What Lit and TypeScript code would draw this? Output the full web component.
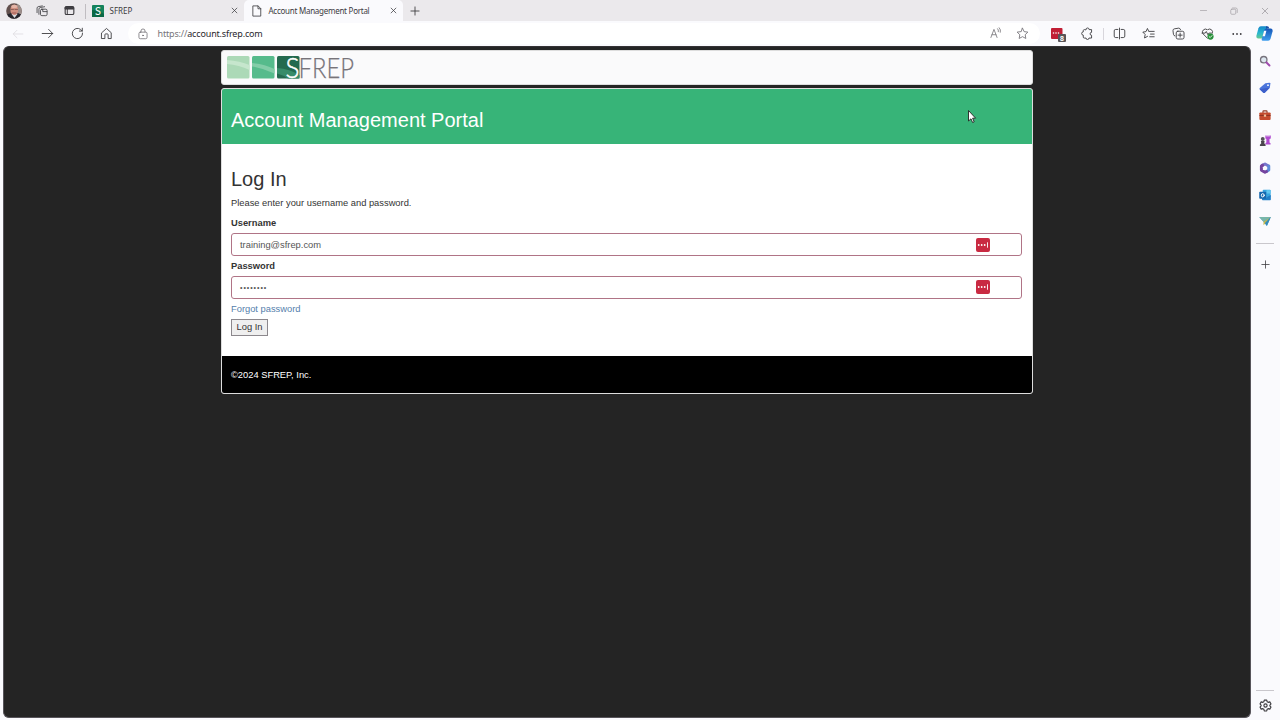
import { LitElement, html, css, svg } from "lit";
import { customElement } from "lit/decorators.js";

const icon = (size: number, body: unknown, box = 16) =>
  html`<svg width=${size} height=${size} viewBox="0 0 ${box} ${box}" fill="none" stroke="currentColor" stroke-width="1.1" stroke-linecap="round" stroke-linejoin="round">${body}</svg>`;

const I = {
  avatar: svg`<defs><clipPath id="face"><circle cx="8" cy="8" r="7.8"/></clipPath></defs>
    <g clip-path="url(#face)" stroke="none"><rect width="16" height="16" fill="#62504d"/><rect x="11" width="5" height="11" fill="#9c8e8a"/>
    <path d="M0 16V12l5-2 3 3 4-3 4 2v4z" fill="#26262d"/><path d="M5.5 11l3 4 3-4z" fill="#d9dbe0"/>
    <ellipse cx="8.3" cy="6.8" rx="3.9" ry="5.3" fill="#cf8f80"/><ellipse cx="8.3" cy="3.4" rx="3" ry="1.7" fill="#e4b5a7"/>
    <path d="M5 6.5h2.5M9 6.5h2.500" stroke="#7d5650" stroke-width=".8"/><path d="M6.5 10h3.5" stroke="#9c5550" stroke-width=".9"/></g>`,
  spaces: svg`<rect x="6" y="5.6" width="8.800" height="8.600" rx="1.8"/><path d="M3.900 12.400V5.500q0-1.700 1.700-2.100L11.500 2.300M1.400 10.200V4.200Q1.400 2.600 2.900 2.200L8.500 1.200M9 5.800v3h5.500" />`,
  tabs: svg`<rect x="1.7" y="2.3" width="12.6" height="11.6" rx="2" stroke-width="1.6"/><path d="M2 3h12v3H2z" fill="currentColor"/><path d="M4.800 6v8" stroke-width="1.4"/>`,
  close: svg`<path d="M2.5 2.5l11 11M13.5 2.5l-11 11" stroke-width="1.7"/>`,
  plus: svg`<path d="M8 1.5v13M1.5 8h13" stroke-width="1.400"/>`,
  page: svg`<path d="M3 1.2h6.5L13 4.8v10H3zM9.3 1.4V5H13"/>`,
  back: svg`<path d="M14.5 8H1.7M6.6 3L1.6 8l5 5"/>`,
  forward: svg`<path d="M1.5 8h12.8M9.4 3l5 5-5 5"/>`,
  reload: svg`<path d="M14.200 7.500a6.300 6.300 0 1 1-2.600-4.600L13.800 5M13.900 1.500V5h-3.600"/>`,
  home: svg`<path d="M2.2 7L8 1.8 13.8 7v7.2H10V9.5q0-1-1-1H7q-1 0-1 1v4.7H2.2z"/>`,
  lock: svg`<rect x="2.6" y="5.5" width="10.8" height="8.8" rx="1.8"/><path d="M5.3 5.3V4a2.7 2.7 0 0 1 5.4 0v1.3"/><circle cx="8" cy="9.9" r=".6" fill="currentColor"/>`,
  read: svg`<path d="M1.2 14L5.3 3.2 9.4 14M2.7 10.3h5.2M10.2 2.3q1.5 1.5 1 4M12.3 1q2.5 2.6 1.5 6"/>`,
  star: svg`<path d="M8 1.5l2 4.2 4.6.6-3.3 3.2.8 4.6L8 11.9l-4.1 2.2.8-4.6L1.4 6.3 6 5.7z"/>`,
  puzzle: svg`<path d="M6 3.2a2 2 0 0 1 4 0h3v3.4a1.8 1.8 0 0 0 0 3.6v3.4H9.8a1.8 1.8 0 0 1-3.6 0H4q-1.2 0-1.2-1.2V10a2 2 0 0 1 0-4V4.4q0-1.2 1.2-1.2z"/>`,
  split: svg`<path d="M6 3H3.3Q1.5 3 1.5 4.8v6.4Q1.5 13 3.3 13H6M10 3h2.7q1.8 0 1.8 1.8v6.4q0 1.8-1.8 1.8H10M8 1.3v13.4"/>`,
  favs: svg`<path d="M8.8 5.4H15M10.5 8.7H15M9.5 12H15M8.2 5.2L6.7 1.8 4.9 5.7l-3.9.6 2.9 2.9-.8 4.3 3.7-2"/>`,
  collections: svg`<rect x="5.2" y="5.2" width="9.6" height="9.6" rx="2"/><path d="M10 7.5v5M7.5 10h5M3.5 11Q2 10.6 1.8 9L1.2 4.5Q1.1 2.7 2.8 2.3l5.4-.9q1.7-.1 2.3 1.8"/>`,
  health: svg`<path d="M8 14L2.4 8.3a3.7 3.7 0 0 1 5.3-5L8 3.6l.3-.3a3.7 3.7 0 0 1 5.6 4.5M1.2 7.5h4l1.3-2 2 4 1.2-2h3"/><circle cx="11.7" cy="11.8" r="3.8" fill="#27903a" stroke="none"/><path d="M10 11.8l1.3 1.2 2.2-2.4" stroke="#fff"/>`,
  more: svg`<g fill="currentColor" stroke="none"><circle cx="3" cy="8" r="1.2"/><circle cx="8" cy="8" r="1.2"/><circle cx="13" cy="8" r="1.2"/></g>`,
  copilot: svg`<defs><linearGradient id="cpa" x1="0" y1="0" x2="0" y2="1"><stop stop-color="#1687c9"/><stop offset=".55" stop-color="#27b7cf"/><stop offset="1" stop-color="#68c990"/></linearGradient><linearGradient id="cpb" x1="0" y1="0" x2="0" y2="1"><stop stop-color="#1556b8"/><stop offset="1" stop-color="#3f9eed"/></linearGradient></defs>
    <g stroke="none"><path d="M4.5 1.2h5q1.6 0 1.2 1.6L8.3 11q-.5 1.7-2.2 1.7H2.2Q0 12.700.4 10.2L2.300 3Q2.900 1.200 4.500 1.200z" fill="url(#cpa)"/><path d="M11.600 3.300h2.200q2.200 0 1.800 2.500L13.700 13q-.6 1.900-2.200 1.900h-5q-1.500 0-1.100-1.600L7.700 5q.5-1.700 2.200-1.700z" fill="url(#cpb)"/><path d="M7.600 5.500h2.200l-1.400 5H6.200z" fill="#fafafd"/><path d="M9.400 1.200h1.200q1.500 0 1.900 2.100h-3z" fill="#174ea6"/></g>`,
  search: svg`<circle cx="6.3" cy="6.300" r="4.300" fill="#dce6ef" stroke="#77737d" stroke-width="1.700"/><path d="M10 10l4 4" stroke="#a04aae" stroke-width="2.600"/>`,
  tag: svg`<path d="M8.500 1.700l5.500-.8q1.200 0 1.200 1l-.8 5.700-6.700 6.700q-1 .8-2 0L1 9.900q-.8-1 0-2z" fill="#4b75dc" stroke="none"/><path d="M1 9.500l4.800 4.900q1 .8 2 0l6.500-6.700L9.500 8z" fill="#3d5fca" stroke="none"/><circle cx="12" cy="4.200" r="1.200" fill="#fff" stroke="none"/>`,
  toolbox: svg`<path d="M5.300 5V3.400q0-.9.900-.9h3.600q.9 0 .9.900V5" stroke="#923b25" stroke-width="1.500"/><rect x=".5" y="4.500" width="15" height="10" rx="1.300" fill="#c44a2c" stroke="none"/><path d="M1 8.600h14" stroke="#7f2d20"/><rect x="6.500" y="7.300" width="3" height="3" fill="#f0c09a" stroke="none"/>`,
  games: svg`<g stroke="none"><path d="M8.500.8h1.700v1.400h1V.8h1.600v1.400h1V.8h1.900v3.800l-1.700.8V10l1.400 1v1.500H8.500V11l1.300-1V5.400l-1.300-.8z" fill="#b04bd0"/><circle cx="5" cy="5.300" r="2.600" fill="#555159"/><path d="M2.500 8h5L7 11l1.800 2v1.800H1.200V13L3 11z" fill="#4a464d"/></g>`,
  office: svg`<g stroke-width="4"><path d="M4.600 4.300L8 2.700l4.800 2.600" stroke="#7774cb"/><path d="M13 5.300v5.400L10 12.600" stroke="#5d8bd8"/><path d="M10 12.700l-2 1L3.200 10.800V5.500L4.800 4.500" stroke="#74449f"/></g>`,
  outlook: svg`<g stroke="none"><rect x="5" y="1" width="10.500" height="9.500" rx="1" fill="#37a5df"/><path d="M10 1.500h5.500v4.500H10z" fill="#62c7ef"/><path d="M4 8l6 3 5.800-3v6q0 1-1 1H5q-1 0-1-1z" fill="#227fc7"/><rect x=".3" y="3.700" width="9.300" height="9.300" rx="1" fill="#1668ae"/></g><ellipse cx="5" cy="8.400" rx="1.900" ry="2.200" stroke="#fff" stroke-width="1.300"/>`,
  drop: svg`<g stroke="none"><path d="M.3 2.700h15.500L10.500 14.500 6.500 9.700z" fill="#4fa3cf"/><path d="M.3 2.700h15.500L6 9z" fill="#78b6aa"/><path d="M15.800 2.700L6 9v4.700l2.200-2.400z" fill="#c3b84d"/><path d="M15.800 2.700L10.500 14.500 8 10.700z" fill="#348abb"/></g>`,
  gear: svg`<path d="M6.500 1.300h3l.5 2 1.300.8 2-.6 1.500 2.600L13.400 7.500v1l1.400 1.400-1.500 2.600-2-.6-1.300.8-.5 2h-3l-.5-2-1.300-.8-2 .6-1.500-2.600 1.400-1.400v-1L1.200 6.100l1.500-2.600 2 .6L6 3.300z" stroke-width="1.400"/><circle cx="8" cy="8" r="2" stroke-width="1.400"/>`,
  min: svg`<path d="M1 8h14" stroke-width="1.600"/>`,
  restore: svg`<rect x="1.500" y="4.500" width="10" height="10" rx="2" stroke-width="1.500"/><path d="M5 2h6.500q3 0 3 3v6" stroke-width="1.500"/>`,
};

const passBadge = html`<svg width="14" height="14" viewBox="0 0 14 14"><rect width="14" height="14" rx="2" fill="#c92a42"/><g fill="#fff"><circle cx="2.700" cy="7" r=".9"/><circle cx="5.700" cy="7" r=".9"/><circle cx="8.700" cy="7" r=".9"/><rect x="11" y="4.300" width=".9" height="5.400"/></g></svg>`;

@customElement("app-root")
export class AppRoot extends LitElement {
  static styles = css`
    :host { display: flex; flex-direction: column; width: 1280px; height: 720px; overflow: hidden; background: #fafafd; color: #3c3b3f; font-family: "Noto Sans", sans-serif; }
    * { box-sizing: border-box; }
    svg { display: block; flex: none; overflow: visible; }
    .strip { display: flex; height: 21px; background: #ebe9ec; align-items: stretch; font-size: 8px; }
    .strip .tab span { padding-bottom: 1px; }
    .cell { display: flex; align-items: center; justify-content: center; flex: none; }
    .w25 { width: 25px; }
    .w27 { width: 27.500px; }
    .w28 { width: 28px; }
    .first { padding-left: 1px; }
    .rule { width: 1px; height: 15px; margin: 2px 0 0 1px; background: #c0bdc1; }
    .tab { display: flex; align-items: center; padding-right: 6px; }
    .tab1 { width: 158px; padding-left: 6px; gap: 6px; }
    .tab2 { width: 159px; padding-left: 7px; gap: 6px; background: #fafafd; border-radius: 5px 5px 0 0; }
    .tab span { flex: 1; white-space: nowrap; }
    .tab2 span { letter-spacing: -.26px; }
    .winctl { display: flex; margin-left: auto; color: #a5a2a6; }
    .winctl .cell { width: 30.500px; }
    .bar { display: flex; height: 25px; align-items: center; padding-left: 3.500px; }
    .nav { display: flex; }
    .nav .cell, .tools .cell { width: 29.500px; }
    .faint { color: #dedce1; }
    .pill { display: flex; align-items: center; width: 912px; height: 21px; margin-left: 6px; background: #fff; border-radius: 11px; padding: 0 11px 0 9px; font-size: 9px; color: #77757a; }
    .pill b { font-weight: 400; color: #29272c; }
    .url { flex: 1; margin-left: 9px; letter-spacing: -.16px; }
    .ends { display: flex; gap: 14px; }
    .tools { display: flex; align-items: center; margin-left: 4px; }
    .tools .line { width: 1px; height: 12px; background: #d8d6dc; margin: 0 1px 0 0; }
    .tools .last { width: 25px; }
    .main { display: flex; flex: 1; min-height: 0; }
    .view { width: 1248px; height: 672px; margin-left: 3px; border: 1px solid #57545a; border-top-color: #343235; background: #242424; border-radius: 6px; padding: 3px 217px 0 216.500px; font-family: "Liberation Sans", Arial, sans-serif; font-size: 9.333px; color: #333; }
    .logo { height: 35px; border: 1px solid #ddd; border-radius: 3px; background: #fafafb; padding: 0 5px; }
    .card { margin-top: 3px; border: 1px solid #ddd; border-radius: 3px; background: #fff; overflow: hidden; height: 306px; display: flex; flex-direction: column; }
    .head { height: 55px; background: #37b478; color: #fff; padding: 19px 9.500px 0; font-size: 20px; line-height: 24px; }
    .body { height: 212px; padding: 23px 10px 0 9.500px; }
    h1 { font-size: 20px; line-height: 24px; font-weight: 400; margin: 0; }
    .intro { margin: 6px 0 7px; line-height: 13px; }
    label { display: block; font-weight: 700; line-height: 13px; }
    .field { display: flex; align-items: center; height: 23px; margin: 3px 0 3.500px; border: 1px solid #b07486; border-radius: 3px; padding: 0 31px 0 8px; color: #555; }
    .field span { flex: 1; }
    .pw { margin: 3.400px 0 4px; }
    .dots { font-size: 7px; letter-spacing: .95px; }
    .link { line-height: 13px; color: #5580ac; }
    .btn { display: flex; align-items: center; justify-content: center; width: 37px; height: 17px; margin-top: 3px; border: 1px solid #8c888d; background: #efefef; }
    .foot { flex: 1; background: #000; color: #fff; padding: 13px 9.500px 0; line-height: 13px; }
    .side { width: 28px; display: flex; flex-direction: column; align-items: center; padding-top: 2px; }
    .side .cell { height: 26.670px; }
    .side .cut { width: 18px; height: 1px; background: #c9c7cc; }
    .side .cut1 { margin-top: 8px; }
    .side .add { height: 41px; }
    .side .push { margin-top: auto; }
    .side .set { height: 29px; }
    .cursor { position: absolute; left: 967px; top: 109px; }
  `;

  render() {
    return html`
      <div class="strip">
        <div class="cell w27 first">${icon(16, I.avatar)}</div>
        <div class="cell w28">${icon(12, I.spaces)}</div>
        <div class="cell w28">${icon(11, I.tabs)}</div>
        <div class="cell"><div class="rule"></div></div>
        <div class="tab tab1">
          <svg width="12" height="12" viewBox="0 0 12 12"><rect width="12" height="12" rx="1" fill="#14825b"/><path d="M0 5q6 0 12 4v3H0z" fill="#0b6945"/><text x="3" y="10.300" font-size="11" font-family="Lato" fill="#fff">S</text></svg>
          <span>SFREP</span>${icon(7, I.close)}
        </div>
        <div class="tab tab2">${icon(12, I.page)}<span>Account Management Portal</span>${icon(7, I.close)}</div>
        <div class="cell w25">${icon(10, I.plus)}</div>
        <div class="winctl">
          <div class="cell">${icon(7, I.min)}</div>
          <div class="cell">${icon(8, I.restore)}</div>
          <div class="cell">${icon(8, I.close)}</div>
        </div>
      </div>
      <div class="bar">
        <div class="nav">
          <div class="cell faint">${icon(12, I.back)}</div>
          <div class="cell">${icon(13, I.forward)}</div>
          <div class="cell">${icon(13, I.reload)}</div>
          <div class="cell">${icon(13, I.home)}</div>
        </div>
        <div class="pill">${icon(12, I.lock)}<span class="url">https://<b>account.sfrep.com</b></span>
          <div class="ends">${icon(12, I.read)}${icon(13, I.star)}</div>
        </div>
        <div class="tools">
          <div class="cell"><svg width="16" height="16" viewBox="0 0 16 16"><rect x="1" y="2" width="11.500" height="11" rx="1" fill="#c11e34"/><g fill="#fff"><circle cx="3.500" cy="7" r=".8"/><circle cx="6" cy="7" r=".8"/><circle cx="8.500" cy="7" r=".8"/></g><rect x="8" y="8" width="8" height="8" rx="1" fill="#585457"/><text x="10" y="14.600" font-size="7" font-weight="700" font-family="Liberation Sans" fill="#fff">8</text></svg></div>
          <div class="cell">${icon(13, I.puzzle)}</div>
          <div class="line"></div>
          <div class="cell">${icon(13, I.split)}</div>
          <div class="cell">${icon(13, I.favs)}</div>
          <div class="cell">${icon(13, I.collections)}</div>
          <div class="cell">${icon(13, I.health)}</div>
          <div class="cell">${icon(12, I.more)}</div>
          <div class="cell last">${icon(17, I.copilot)}</div>
        </div>
      </div>
      <div class="main">
        <div class="view">
          <div class="logo">
            <svg width="134" height="33" viewBox="0 -5 134 33">
              <rect x="0" y="0" width="22.500" height="22.500" rx="1.500" fill="#acd9b7"/><path d="M0 4q13 1 22.500 5v5Q12 9 0 8z" fill="#c6e6cd"/>
              <rect x="25" y="0" width="22.500" height="22.500" rx="1.500" fill="#56bb8c"/><path d="M25 7q12 1 22.500 6v4.500q-11-5-22.500-7z" fill="#83cda8"/>
              <rect x="50" y="0" width="22.500" height="22.500" rx="1.500" fill="#246a4f"/><path d="M50 12q13 1 22.500 7v3.500H61q-5-3.500-11-5z" fill="#378c69"/>
              <text x="58.500" y="21.500" font-family="Lato" font-weight="300" font-size="27" fill="#fff" stroke="#fff" stroke-width=".5" textLength="14" lengthAdjust="spacingAndGlyphs">S</text>
              <text x="71.500" y="21.500" font-family="Lato" font-weight="300" font-size="27" fill="#77747a" stroke="#77747a" stroke-width=".25" textLength="55.500" lengthAdjust="spacingAndGlyphs">FREP</text>
            </svg>
          </div>
          <div class="card">
            <div class="head">Account Management Portal</div>
            <div class="body">
              <h1>Log In</h1>
              <div class="intro">Please enter your username and password.</div>
              <label>Username</label>
              <div class="field"><span>training@sfrep.com</span>${passBadge}</div>
              <label>Password</label>
              <div class="field pw"><span class="dots">••••••••</span>${passBadge}</div>
              <div class="link">Forgot password</div>
              <div class="btn">Log In</div>
            </div>
            <div class="foot">©2024 SFREP, Inc.</div>
          </div>
        </div>
        <div class="side">
          ${[I.search, I.tag, I.toolbox, I.games, I.office, I.outlook, I.drop].map((g) => html`<div class="cell">${icon(12, g)}</div>`)}
          <div class="cut cut1"></div>
          <div class="cell add">${icon(9, I.plus)}</div>
          <div class="cut push"></div>
          <div class="cell set">${icon(13, I.gear)}</div>
        </div>
      </div>
      <svg class="cursor" width="9" height="15" viewBox="0 0 9 15"><path d="M1.500 1.500v10.500l2.500-2.200 1.600 3.700 1.600-.7-1.600-3.600h3z" fill="#fff" stroke="#222" stroke-width=".9"/></svg>
    `;
  }
}
